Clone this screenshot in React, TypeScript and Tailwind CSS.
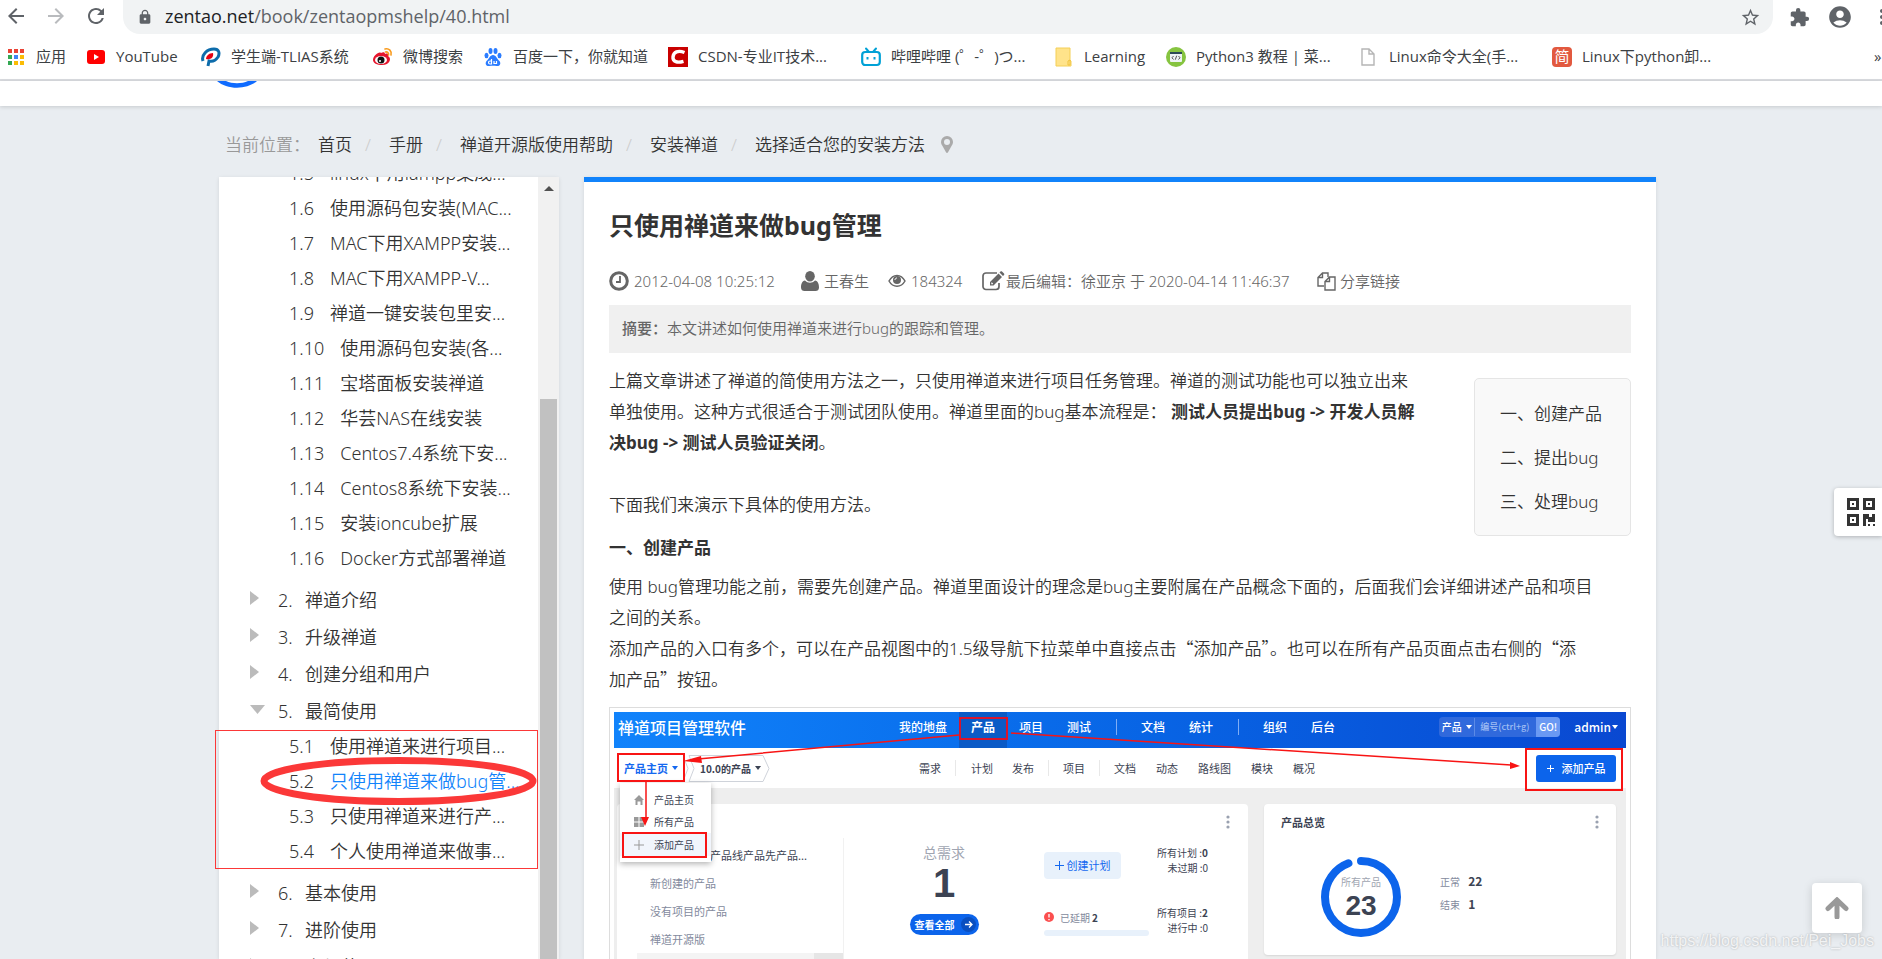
import type { ReactNode } from "react";
import {
	MdAccountCircle,
	MdArrowBack,
	MdArrowForward,
	MdExtension,
	MdLock,
	MdMoreVert,
	MdRefresh,
	MdStarBorder,
} from "react-icons/md";

interface Bookmark {
	label: string;
	width: string;
	icon: ReactNode;
}

interface Chapter {
	no: string;
	title: string;
	open?: boolean;
	children?: { no: string; title: string; active?: boolean }[];
}

const AppsIcon = () => (
	<svg width="20" height="20" viewBox="0 0 20 20">
		{["#ea4335", "#ea4335", "#ea4335", "#34a853", "#4285f4", "#fbbc05", "#34a853", "#fbbc05", "#fbbc05"].map(
			(fill, i) => (
				<rect
					key={i}
					x={2 + (i % 3) * 6}
					y={2 + Math.floor(i / 3) * 6}
					width="4"
					height="4"
					fill={fill}
				/>
			),
		)}
	</svg>
);

const YouTubeIcon = () => (
	<svg width="20" height="20" viewBox="0 0 20 20">
		<rect x="1" y="3" width="18" height="14" rx="3" fill="#f00" />
		<path d="M8 7l5 3-5 3z" fill="#fff" />
	</svg>
);

const TliasIcon = () => (
	<svg width="20" height="20" viewBox="0 0 20 20">
		<path
			d="M2 14C0 8 6 2 13 2c5 0 6 4 4 8-2 3-5 5-9 4l-1 5"
			fill="none"
			stroke="#0d6cab"
			strokeWidth="3"
		/>
		<path d="M5 12c0-3 3-6 7-6 1 4-2 7-7 6z" fill="#e60012" />
	</svg>
);

const WeiboIcon = () => (
	<svg width="20" height="20" viewBox="0 0 20 20">
		<path
			d="M8 6c2-1 4-1 4 1 3-1 4 0 3 2 4 2 2 9-6 9-5 0-9-2-9-5 0-4 6-9 8-7z"
			fill="#e6162d"
		/>
		<ellipse cx="8" cy="13" rx="6" ry="4" fill="#fff" />
		<circle cx="8" cy="13" r="3.5" fill="#111" />
		<circle cx="7" cy="14" r="1" fill="#fff" />
		<path
			d="M12 2c4-1 7 2 6 6M12.500 5c2-.5 3.500 1 3 3"
			fill="none"
			stroke="#f99a1c"
			strokeWidth="1.600"
			strokeLinecap="round"
		/>
	</svg>
);

const BaiduIcon = () => (
	<svg width="20" height="20" viewBox="0 0 20 20" fill="#2b7cff">
		<ellipse cx="7.500" cy="4" rx="2" ry="3" />
		<ellipse cx="12.500" cy="4" rx="2" ry="3" />
		<ellipse cx="3.500" cy="8.500" rx="2" ry="2.700" />
		<ellipse cx="16.500" cy="8.500" rx="2" ry="2.700" />
		<path d="M10 8c3 0 4 4 6.500 6 2 3 0 5.500-3 5-2-.4-5-.4-7 0-3 .5-5-2-3-5C6 12 7 8 10 8z" />
		<path
			d="M8.500 12v5H7a1.500 1.500 0 0 1 0-3h1.500M11 14v2.500h2.500V14"
			fill="none"
			stroke="#fff"
			strokeWidth="1.200"
		/>
	</svg>
);

const CsdnIcon = () => (
	<svg width="20" height="20" viewBox="0 0 20 20">
		<rect width="20" height="20" fill="#c90000" />
		<path
			d="M16.500 5.500C10 3 5.500 5 5 10s4.500 6 10.500 4.300"
			fill="none"
			stroke="#fff"
			strokeWidth="3.400"
		/>
	</svg>
);

const BilibiliIcon = () => (
	<svg width="20" height="20" viewBox="0 0 20 20" fill="none" stroke="#00a1d6">
		<rect x="1.200" y="5" width="17.600" height="13" rx="3" strokeWidth="2.200" />
		<path d="M5 1.500L8 5M15 1.500L12 5" strokeWidth="2" strokeLinecap="round" />
		<path d="M6.500 10v2.500M13.500 10v2.500" strokeWidth="2" />
	</svg>
);

const FolderIcon = () => (
	<svg width="20" height="20" viewBox="0 0 20 20">
		<path d="M2 1h14v12l1 1v5H2z" fill="#ffe38a" stroke="#f4cf57" />
		<path d="M14 18v-4l2-1v5z" fill="#ffe38a" stroke="#f0c23c" />
	</svg>
);

const RunoobIcon = () => (
	<svg width="20" height="20" viewBox="0 0 20 20">
		<circle cx="10" cy="10" r="10" fill="#86c440" />
		<rect x="4" y="5" width="12" height="10" rx="1" fill="#eef3f5" />
		<rect x="4" y="5" width="12" height="2" fill="#2d4a57" />
		<path
			d="M7.500 9L6 10.800l1.500 1.700M12.500 9l1.500 1.800-1.500 1.700M10.700 8.700l-1.400 4"
			fill="none"
			stroke="#555"
		/>
	</svg>
);

const FileIcon = () => (
	<svg width="20" height="20" viewBox="0 0 20 20">
		<path
			d="M3 2h7l5 5v11H3zM10 2v5h5"
			fill="#fff"
			stroke="#b5b5b5"
			strokeWidth="1.400"
		/>
	</svg>
);

const JianshuIcon = () => (
	<span className="flex size-5 items-center justify-center rounded-sm bg-[#e2593f] text-[15px] leading-none text-white">
		简
	</span>
);

const bookmarks: Bookmark[] = [
	{ label: "应用", width: "w-[30px]", icon: <AppsIcon /> },
	{ label: "YouTube", width: "w-[65px]", icon: <YouTubeIcon /> },
	{ label: "学生端-TLIAS系统", width: "w-[122px]", icon: <TliasIcon /> },
	{ label: "微博搜索", width: "w-[60px]", icon: <WeiboIcon /> },
	{ label: "百度一下，你就知道", width: "w-[135px]", icon: <BaiduIcon /> },
	{ label: "CSDN-专业IT技术...", width: "w-[143px]", icon: <CsdnIcon /> },
	{ label: "哔哩哔哩 (゜-゜)つ...", width: "w-[143px]", icon: <BilibiliIcon /> },
	{ label: "Learning", width: "w-[62px]", icon: <FolderIcon /> },
	{ label: "Python3 教程 | 菜...", width: "w-[143px]", icon: <RunoobIcon /> },
	{ label: "Linux命令大全(手...", width: "w-[143px]", icon: <FileIcon /> },
	{ label: "Linux下python卸...", width: "w-[143px]", icon: <JianshuIcon /> },
];

const crumbs = ["首页", "手册", "禅道开源版使用帮助", "安装禅道", "选择适合您的安装方法"];

const firstChapter = [
	{ no: "1.5", title: "linux下用lampp集成..." },
	{ no: "1.6", title: "使用源码包安装(MAC..." },
	{ no: "1.7", title: "MAC下用XAMPP安装..." },
	{ no: "1.8", title: "MAC下用XAMPP-V..." },
	{ no: "1.9", title: "禅道一键安装包里安..." },
	{ no: "1.10", title: "使用源码包安装(各..." },
	{ no: "1.11", title: "宝塔面板安装禅道" },
	{ no: "1.12", title: "华芸NAS在线安装" },
	{ no: "1.13", title: "Centos7.4系统下安..." },
	{ no: "1.14", title: "Centos8系统下安装..." },
	{ no: "1.15", title: "安装ioncube扩展" },
	{ no: "1.16", title: "Docker方式部署禅道" },
];

const chapters: Chapter[] = [
	{ no: "2.", title: "禅道介绍" },
	{ no: "3.", title: "升级禅道" },
	{ no: "4.", title: "创建分组和用户" },
	{
		no: "5.",
		title: "最简使用",
		open: true,
		children: [
			{ no: "5.1", title: "使用禅道来进行项目..." },
			{ no: "5.2", title: "只使用禅道来做bug管...", active: true },
			{ no: "5.3", title: "只使用禅道来进行产..." },
			{ no: "5.4", title: "个人使用禅道来做事..." },
		],
	},
	{ no: "6.", title: "基本使用" },
	{ no: "7.", title: "进阶使用" },
	{ no: "8.", title: "高级使用" },
];

const BrowserBar = () => (
	<header className="shrink-0 border-b-2 border-[#dadce0] bg-white font-['Open_Sans','Noto_Sans_CJK_SC',sans-serif] font-normal text-[#3c4043]">
		<div className="flex h-[34px] items-start text-[#5f6368]">
			<div className="flex w-[123px] shrink-0 items-center gap-4 pt-1 pl-1">
				<button type="button" aria-label="后退">
					<MdArrowBack size={24} />
				</button>
				<button type="button" aria-label="前进" className="text-[#b9bbbe]">
					<MdArrowForward size={24} />
				</button>
				<button type="button" aria-label="刷新">
					<MdRefresh size={24} />
				</button>
			</div>
			<div className="flex h-[34px] flex-1 items-center rounded-b-[17px] bg-[#f1f3f4] pr-3 pl-[14px]">
				<MdLock size={16} className="mr-3 shrink-0" />
				<span className="flex-1 pb-[2px] text-[18px] leading-6">
					<span className="text-[#202124]">zentao.net</span>
					/book/zentaopmshelp/40.html
				</span>
				<button type="button" aria-label="收藏">
					<MdStarBorder size={21} />
				</button>
			</div>
			<div className="flex w-[109px] shrink-0 items-center gap-[17px] overflow-hidden pt-1 pl-4">
				<button type="button" aria-label="扩展程序">
					<MdExtension size={21} />
				</button>
				<button type="button" aria-label="用户">
					<MdAccountCircle size={26} />
				</button>
				<button type="button" aria-label="菜单">
					<MdMoreVert size={24} />
				</button>
			</div>
		</div>
		<nav className="flex h-[45px] items-center gap-5 pl-[6px] text-[15px]">
			{bookmarks.map((item) => (
				<a key={item.label} href="#" className="flex items-center gap-[10px]">
					{item.icon}
					<span className={`whitespace-nowrap ${item.width}`}>{item.label}</span>
				</a>
			))}
			<button type="button" className="ml-auto w-[8px] overflow-hidden text-left">
				»
			</button>
		</nav>
	</header>
);

const Breadcrumb = () => (
	<nav className="ml-[225px] flex h-[71px] shrink-0 items-center pt-[6px] text-[17px] text-[#333]">
		<span className="w-[93px] text-[#999]">当前位置：</span>
		{crumbs.map((crumb, i) => (
			<span key={crumb} className="flex items-center">
				{i > 0 && <span className="w-[37px] pl-[13px] text-[#ccc]">/</span>}
				<a href="#">{crumb}</a>
			</span>
		))}
		<svg className="ml-4" width="12" height="17" viewBox="0 0 12 17">
			<path
				fillRule="evenodd"
				d="M6 0a6 6 0 0 1 6 6c0 2-1 3-1.500 4L7 16.300c-.4.900-1.600.900-2 0L1.500 10C1 9 0 8 0 6a6 6 0 0 1 6-6zm0 3a3 3 0 1 0 0 6 3 3 0 0 0 0-6z"
				fill="#aaa"
			/>
		</svg>
	</nav>
);

const LeafRow = ({
	no,
	title,
	active,
}: {
	no: string;
	title: string;
	active?: boolean;
}) => (
	<li className="flex h-[35px] items-center gap-4 pb-[2px] pl-[70px] whitespace-nowrap">
		<span>{no}</span>
		<a href="#" className={active ? "text-[#1183fb]" : ""}>
			{title}
		</a>
	</li>
);

const Sidebar = () => (
	<aside className="relative flex w-[340px] shrink-0 bg-white text-[18px] text-[#333] shadow-[0_1px_4px_rgba(0,0,0,0.1)]">
		<div className="h-0 min-h-full flex-1 overflow-hidden">
			<ul className="-mt-5 mb-[6px]">
				{firstChapter.map((item) => (
					<LeafRow key={item.no} {...item} />
				))}
			</ul>
			<ul className="flex flex-col gap-px">
				{chapters.map((chapter) => (
					<li key={chapter.no}>
						<div className="flex h-9 items-center pb-[2px] pl-[31px]">
							<span className="mb-1 w-7">
								{chapter.open ? (
									<svg width="15" height="9" viewBox="0 0 15 9">
										<path d="M0 0h15L7.500 9z" fill="#bbb" />
									</svg>
								) : (
									<svg width="9" height="14" viewBox="0 0 9 14">
										<path d="M0 0v14L9 7z" fill="#bbb" />
									</svg>
								)}
							</span>
							<span className="w-[27px]">{chapter.no}</span>
							<a href="#">{chapter.title}</a>
						</div>
						{chapter.children && (
							<ul className="pb-[5px]">
								{chapter.children.map((item) => (
									<LeafRow key={item.no} {...item} />
								))}
							</ul>
						)}
					</li>
				))}
			</ul>
		</div>
		<div className="flex w-[21px] flex-col items-center bg-[#f1f1f1]">
			<svg className="mt-[9px]" width="10" height="5" viewBox="0 0 10 5">
				<path d="M5 0l5 5H0z" fill="#505050" />
			</svg>
			<div className="mt-52 w-[17px] flex-1 bg-[#c1c1c1]" />
		</div>
		{/* hand-drawn marks over chapter 5 */}
		<svg
			className="absolute top-[553px] -left-1"
			width="324"
			height="140"
			viewBox="0 0 324 140"
			fill="none"
			stroke="#fb3838"
		>
			<rect x=".5" y=".5" width="322" height="138" />
			<ellipse cx="183.500" cy="51" rx="134.500" ry="20.500" strokeWidth="7" />
		</svg>
	</aside>
);

const ClockIcon = () => (
	<svg width="20" height="20" viewBox="0 0 20 20" fill="none" stroke="#666">
		<circle cx="10" cy="10" r="8.300" strokeWidth="3" />
		<path d="M11 5v6H7" strokeWidth="1.800" />
	</svg>
);

const UserIcon = () => (
	<svg width="18" height="20" viewBox="0 0 18 20" fill="#666">
		<ellipse cx="9" cy="5.200" rx="4.800" ry="5.200" />
		<path d="M4 9.500C1 10 0 13 0 16.500 0 19 1.500 20 3.500 20h11c2 0 3.500-1 3.500-3.500 0-3.500-1-6.500-4-7-3 3-7 3-10 0z" />
	</svg>
);

const EyeIcon = () => (
	<svg width="18" height="14" viewBox="0 0 18 14">
		<path
			d="M1 7c4-7.500 12-7.500 16 0-4 7-12 7-16 0z"
			fill="none"
			stroke="#666"
			strokeWidth="1.500"
		/>
		<circle cx="9" cy="6" r="4" fill="#666" />
		<path d="M7 6c0-1.200.8-2 2-2" fill="none" stroke="#fff" />
	</svg>
);

const EditIcon = () => (
	<svg width="24" height="20" viewBox="0 0 24 20">
		<path
			d="M17 12v3.500a3 3 0 0 1-3 3H4a3 3 0 0 1-3-3V5a3 3 0 0 1 3-3h11"
			fill="none"
			stroke="#666"
			strokeWidth="1.700"
		/>
		<path
			fillRule="evenodd"
			d="M8 11l8.500-8.500L20 6l-8.500 8.500H8zm1.300.8v1.400h1.400l.5-.5-1.400-1.400zM17.500 1.500l1-1c.5-.5 1-.5 1.500 0l2 2c.5.5.5 1 0 1.500l-1 1z"
			fill="#666"
		/>
	</svg>
);

const CopyIcon = () => (
	<svg
		width="19"
		height="19"
		viewBox="0 0 19 19"
		fill="none"
		stroke="#666"
		strokeWidth="1.400"
	>
		<path d="M7 14H1V5.500L5.500 1H11v4M5.500 1v4.500H1" />
		<path d="M8 9.500L12.500 5H18v13H8zM12.500 5v4.500H8" />
	</svg>
);

const Caret = ({ className }: { className?: string }) => (
	<svg width="6" height="4" viewBox="0 0 6 4" fill="currentColor" className={className}>
		<path d="M0 0h6L3 4z" />
	</svg>
);

const Dots = () => (
	<svg width="4" height="14" viewBox="0 0 4 14" fill="#9aa1b0">
		<circle cx="2" cy="2" r="1.600" />
		<circle cx="2" cy="7" r="1.600" />
		<circle cx="2" cy="12" r="1.600" />
	</svg>
);

const NavSeparator = () => (
	<span className="flex w-[26px] justify-center pb-[6px]">
		<span className="h-4 w-px bg-[#7fadf5]" />
	</span>
);

const SubSeparator = () => <span className="h-4 w-px bg-[#e8e8e8]" />;

const DemoNav = () => (
	<div className="flex h-9 items-center bg-linear-to-r from-[#1183fb] to-[#0a48d1] text-[12px] leading-[18px] font-medium text-white">
		<span className="w-[273px] pb-[6px] pl-1 text-[16px]">禅道项目管理软件</span>
		<div className="flex h-9 items-center text-center">
			<span className="w-[72px] pb-[6px]">我的地盘</span>
			<span className="h-9 w-12 bg-[#0b5bc6] pt-[6px] font-bold">产品</span>
			<span className="w-12 pb-[6px]">项目</span>
			<span className="w-12 pb-[6px]">测试</span>
			<NavSeparator />
			<span className="w-12 pb-[6px]">文档</span>
			<span className="w-12 pb-[6px]">统计</span>
			<NavSeparator />
			<span className="w-12 pb-[6px]">组织</span>
			<span className="w-12 pb-[6px]">后台</span>
		</div>
		<div className="mb-[6px] ml-auto flex h-5 items-center rounded-sm bg-[#3069dc] text-[10px]">
			<span className="flex w-9 items-center justify-center gap-1 border-r border-[#5b8ae6]">
				产品
				<Caret />
			</span>
			<span className="w-[61px] pl-[5px] text-[9px] text-[#9fbdf3]">编号(ctrl+g)</span>
			<span className="h-5 w-6 rounded-r-sm bg-[#6a99f3] text-center leading-5">GO!</span>
		</div>
		<span className="mr-2 mb-[6px] ml-[14px] flex items-center gap-px text-[12px]">
			admin
			<Caret />
		</span>
	</div>
);

const DemoSubNav = () => (
	<div className="flex h-10 items-center bg-white text-[11px] text-[#3c4353]">
		<span className="flex w-[73px] items-center gap-1 pl-[10px] font-bold text-[#1468f0]">
			产品主页
			<Caret />
		</span>
		<span className="relative flex h-[27px] w-[84px] items-center gap-1 pl-[13px] text-[10px] font-bold">
			<svg
				className="absolute top-0 -left-1"
				width="90"
				height="27"
				viewBox="0 0 90 27"
				fill="none"
				stroke="#cfd3da"
			>
				<path d="M0 .5l5 13-5 13M6 .5h74l6 13-6 13H6l5-13z" />
			</svg>
			10.0的产品
			<Caret />
		</span>
		<div className="ml-[148px] flex items-center">
			<span className="w-9">需求</span>
			<SubSeparator />
			<span className="ml-[15px] w-[41px]">计划</span>
			<span className="w-9">发布</span>
			<SubSeparator />
			<span className="ml-[14px] w-9">项目</span>
			<SubSeparator />
			<span className="ml-[14px] w-[42px]">文档</span>
			<span className="w-[42px]">动态</span>
			<span className="w-[53px]">路线图</span>
			<span className="w-[42px]">模块</span>
			<span className="w-[42px]">概况</span>
		</div>
		<span className="mr-[10px] ml-auto flex h-[27px] w-20 items-center justify-center gap-2 rounded-[3px] bg-[#0c64eb] font-medium text-white">
			<svg width="7" height="7" viewBox="0 0 7 7" stroke="#fff">
				<path d="M0 3.500h7M3.500 0v7" />
			</svg>
			添加产品
		</span>
	</div>
);

const DemoOverview = () => (
	<div className="flex h-[180px] flex-1 rounded bg-white">
		<div className="mt-[34px] flex w-[227px] flex-col border-r border-[#f1f1f1] text-[11px] text-[#838a9d]">
			<span className="h-[31px] pt-[9px] pl-[93px] leading-4 text-[#3c4353]">产品线产品先产品...</span>
			<span className="h-7 pl-[33px] leading-7">新创建的产品</span>
			<span className="h-7 pl-[33px] leading-7">没有项目的产品</span>
			<span className="h-7 pl-[33px] leading-7">禅道开源版</span>
			<span className="ml-5 flex h-7 justify-end bg-[#f4f4f4]">
				<span className="w-[29px] bg-[#e6e6e6]" />
			</span>
		</div>
		<div className="flex w-[200px] flex-col items-center pt-[38px]">
			<span className="text-[14px] leading-5 text-[#a0a5b1]">总需求</span>
			<span className="font-['Liberation_Sans',sans-serif] text-[40px] leading-[42px] font-bold text-[#3c4353]">
				1
			</span>
			<span className="mt-[10px] flex h-[21px] w-[69px] items-center justify-end gap-[6px] rounded-full bg-[#0c64eb] pr-[3px] text-[10px] font-bold text-white">
				查看全部
				<svg width="15" height="15" viewBox="0 0 15 15" fill="none">
					<circle cx="7.500" cy="7.500" r="7.500" fill="#0a4fc0" />
					<path d="M4 7.500h7M8 4.500l3 3-3 3" stroke="#fff" strokeWidth="1.300" />
				</svg>
			</span>
		</div>
		<div className="flex w-[108px] flex-col pt-12 text-[10px]">
			<span className="flex h-[27px] w-[77px] items-center justify-center gap-[3px] rounded-sm bg-[#e8f1fb] text-[11px] text-[#1468f0]">
				<svg width="9" height="9" viewBox="0 0 9 9" stroke="#1468f0">
					<path d="M0 4.500h9M4.500 0v9" />
				</svg>
				创建计划
			</span>
			<span className="mt-[30px] flex h-4 items-center text-[#838a9d]">
				<svg className="mr-[6px]" width="10" height="10" viewBox="0 0 10 10">
					<circle cx="5" cy="5" r="5" fill="#fb4f4f" />
					<path d="M5 2v3.500M5 7v1.200" stroke="#fff" strokeWidth="1.300" />
				</svg>
				已延期
				<b className="ml-[2px] text-[#3c4353]">2</b>
			</span>
			<span className="mt-[5px] h-[6px] w-[105px] rounded-sm bg-[#e8f1fb]" />
		</div>
		<div className="w-[56px] pt-[41px] text-right text-[10px] leading-[15px] text-[#3c4353]">
			<p>
				所有计划 :<b>0</b>
			</p>
			<p>未过期 :0</p>
			<p className="mt-[30px]">
				所有项目 :<b>2</b>
			</p>
			<p>进行中 :0</p>
		</div>
		<div className="mt-[11px] mr-[18px] ml-auto">
			<Dots />
		</div>
	</div>
);

const DemoSummary = () => (
	<div className="h-[151px] w-[352px] rounded bg-white px-[17px] pt-[10px] shadow-[0_1px_2px_rgba(0,0,0,0.1)]">
		<div className="flex items-center justify-between text-[11px] leading-4 font-bold text-[#3c4353]">
			产品总览
			<Dots />
		</div>
		<div className="mt-[27px] flex items-center pl-10">
			<svg width="80" height="80" viewBox="0 0 80 80">
				<circle
					cx="40"
					cy="40"
					r="36"
					fill="none"
					stroke="#0c64eb"
					strokeWidth="8"
					strokeLinecap="round"
					strokeDasharray="213 227"
					transform="rotate(-90 40 40)"
				/>
				<text x="40" y="29" textAnchor="middle" fontSize="10" fill="#a0a5b1">
					所有产品
				</text>
				<text
					x="40"
					y="58"
					textAnchor="middle"
					fontSize="28"
					fontWeight="bold"
					fontFamily="Liberation Sans"
					fill="#3c4353"
				>
					23
				</text>
			</svg>
			<div className="mb-2 ml-[39px] text-[10px] leading-[22px] text-[#838a9d]">
				<p>
					正常 <b className="ml-[6px] text-[12px] text-[#3c4353]">22</b>
				</p>
				<p>
					结束 <b className="ml-[6px] text-[12px] text-[#3c4353]">1</b>
				</p>
			</div>
		</div>
	</div>
);

const DemoMenu = () => (
	<div className="absolute top-[71px] left-[6px] w-[91px] bg-white py-[6px] text-[10px] leading-[22px] text-[#3c4353] shadow-[0_2px_6px_rgba(0,0,0,0.3)]">
		<p className="flex h-[22px] items-center gap-[10px] pl-[14px]">
			<svg width="10" height="10" viewBox="0 0 10 10" fill="#999">
				<path d="M5 0l5 5H8.500v5h-2V6.500h-3V10h-2V5H0z" />
			</svg>
			产品主页
		</p>
		<p className="flex h-[22px] items-center gap-[10px] pl-[14px]">
			<svg width="10" height="10" viewBox="0 0 10 10" fill="#999">
				<path d="M0 0h4.500v4.500H0zM5.500 0H10v4.500H5.500zM0 5.500h4.500V10H0zM5.500 5.500H10V10H5.500z" />
			</svg>
			所有产品
		</p>
		<p className="flex h-[23px] items-center gap-[10px] bg-[#f1f5fc] pl-[14px]">
			<svg width="10" height="10" viewBox="0 0 10 10" stroke="#999">
				<path d="M0 5h10M5 0v10" />
			</svg>
			添加产品
		</p>
	</div>
);

const DemoFigure = () => (
	<figure className="mt-3 border border-[#ddd] p-1 font-normal">
		<div className="relative overflow-hidden bg-[#eee] font-['Noto_Sans_CJK_SC',sans-serif]">
			<DemoNav />
			<DemoSubNav />
			<div className="flex items-start gap-4 pt-4 pr-[10px] pb-4 pl-[3px]">
				<DemoOverview />
				<DemoSummary />
			</div>
			<DemoMenu />
			<svg
				className="absolute top-0 left-0"
				width="1012"
				height="247"
				viewBox="0 0 1012 247"
				fill="none"
				stroke="#f81414"
				strokeWidth="2"
			>
				<rect x="346" y="6" width="47" height="21" stroke="#d8142c" />
				<rect x="4" y="42" width="66" height="27" />
				<rect x="9" y="121" width="83" height="24" />
				<rect x="912" y="37" width="96" height="41" />
				<path d="M345 23L84 47M32 70v36M397 21l500 32" strokeWidth="1.500" />
				<path d="M69 49l18-5 1 7zM31 114l-4-9h8zM906 54l-10-4v7z" fill="#f81414" stroke="none" />
			</svg>
		</div>
	</figure>
);

// leading-none keeps the second font from growing the line box
const Cjk = ({ children }: { children: ReactNode }) => (
	<span className="font-['Noto_Sans_CJK_SC',sans-serif] leading-none">{children}</span>
);

const Article = () => (
	<article className="min-w-0 flex-1 overflow-hidden border-t-[5px] border-[#1183fb] bg-white px-[25px] pt-[23px] text-[17px] leading-[31px] text-[#333] shadow-[0_1px_4px_rgba(0,0,0,0.1)]">
		<h1 className="text-[25px] leading-10 font-bold">只使用禅道来做bug管理</h1>
		<div className="mt-6 flex h-6 items-center text-[15px] leading-6 whitespace-nowrap text-[#666]">
			<span className="flex w-48 items-center gap-[5px]">
				<ClockIcon />
				2012-04-08 10:25:12
			</span>
			<span className="flex w-[87px] items-center gap-[5px]">
				<UserIcon />
				王春生
			</span>
			<span className="flex w-[94px] items-center gap-[5px]">
				<EyeIcon />
				184324
			</span>
			<span className="flex w-[335px] items-center">
				<EditIcon />
				最后编辑：徐亚京 于 2020-04-14 11:46:37
			</span>
			<a href="#" className="flex items-center gap-1">
				<CopyIcon />
				分享链接
			</a>
		</div>
		<p className="mt-3 bg-[#f0f0f0] px-[13px] pb-[2px] text-[15px] leading-[46px] text-[#666]">
			<b className="font-medium">摘要：</b>
			本文讲述如何使用禅道来进行bug的跟踪和管理。
		</p>
		<ul className="float-right mt-[25px] w-[157px] rounded-[5px] border border-[#e5e5e5] bg-[#f9f9f9] px-[25px] pt-[13px] pb-[11px] leading-[44px]">
			<li>
				<a href="#">一、创建产品</a>
			</li>
			<li>
				<a href="#">二、提出bug</a>
			</li>
			<li>
				<a href="#">三、处理bug</a>
			</li>
		</ul>
		<p className="mt-3">
			上篇文章讲述了禅道的简使用方法之一，只使用禅道来进行项目任务管理。禅道的测试功能也可以独立出来
			<br />
			单独使用。这种方式很适合于测试团队使用。禅道里面的bug基本流程是：{" "}
			<b className="font-bold">
				测试人员提出bug -&gt; 开发人员解
				<br />
				决bug -&gt; 测试人员验证关闭
			</b>
			。
		</p>
		<p className="mt-[31px]">下面我们来演示下具体的使用方法。</p>
		<h2 className="mt-3 font-bold">一、创建产品</h2>
		<p className="mt-2">
			使用 bug管理功能之前，需要先创建产品。禅道里面设计的理念是bug主要附属在产品概念下面的，后面我们会详细讲述产品和项目
			<br />
			之间的关系。
			<br />
			添加产品的入口有多个，可以在产品视图中的1.5级导航下拉菜单中直接点击
			<Cjk>“添加产品”</Cjk>。也可以在所有产品页面点击右侧的
			<Cjk>“添</Cjk>
			<br />
			<Cjk>加产品”</Cjk>按钮。
		</p>
		<DemoFigure />
	</article>
);

// finder square of the QR glyph
const Finder = ({ x, y }: { x: number; y: number }) => (
	<g>
		<rect x={x + 1.5} y={y + 1.5} width="9" height="9" fill="none" strokeWidth="3" />
		<rect x={x + 5} y={y + 5} width="2" height="2" strokeWidth="0" />
	</g>
);

const FloatingTools = () => (
	<>
		<button
			type="button"
			aria-label="二维码"
			className="absolute top-[488px] right-0 flex size-12 items-center rounded-l bg-white pl-[13px] shadow-[0_1px_4px_rgba(0,0,0,0.25)]"
		>
			<svg width="28" height="28" viewBox="0 0 28 28" fill="#333" stroke="#333">
				<Finder x={0} y={0} />
				<Finder x={16} y={0} />
				<Finder x={0} y={16} />
				<path
					d="M16 16h6v3h3v-3h3v8h-7v-3h-2v7h-3zM21 26h2v2h-2zM26 26h2v2h-2z"
					stroke="none"
				/>
			</svg>
		</button>
		<button
			type="button"
			aria-label="返回顶部"
			className="absolute right-5 bottom-[26px] flex size-[50px] items-center justify-center rounded bg-white shadow-[0_2px_10px_rgba(0,0,0,0.15)]"
		>
			<svg width="24" height="22" viewBox="0 0 24 22">
				<path
					d="M12 3v17M3 11.500L12 3l9 8.500"
					fill="none"
					stroke="#999"
					strokeWidth="5"
					strokeLinecap="round"
				/>
			</svg>
		</button>
		<span className="absolute right-2 bottom-[6px] font-['Liberation_Sans',sans-serif] text-[16px] leading-6 font-normal text-white/80 [text-shadow:0_0_2px_rgba(0,0,0,0.3)]">
			https://blog.csdn.net/Pei_Jobs
		</span>
	</>
);

export default function App() {
	return (
		<div className="relative flex h-screen flex-col overflow-hidden bg-[#e9edf1] font-['Noto_Sans','Noto_Sans_CJK_SC',sans-serif] font-[350]">
			<BrowserBar />
			<div className="h-[25px] shrink-0 bg-white pl-[217px] shadow-[0_1px_4px_rgba(0,0,0,0.15)]">
				<svg width="40" height="7" viewBox="0 0 40 7">
					<path d="M0 0c10 9 30 9 40 0h-9c-6 3-16 3-22 0z" fill="#0f6bff" />
				</svg>
			</div>
			<Breadcrumb />
			<main className="mr-[226px] ml-[219px] flex min-h-0 flex-1 gap-[25px]">
				<Sidebar />
				<Article />
			</main>
			<FloatingTools />
		</div>
	);
}
